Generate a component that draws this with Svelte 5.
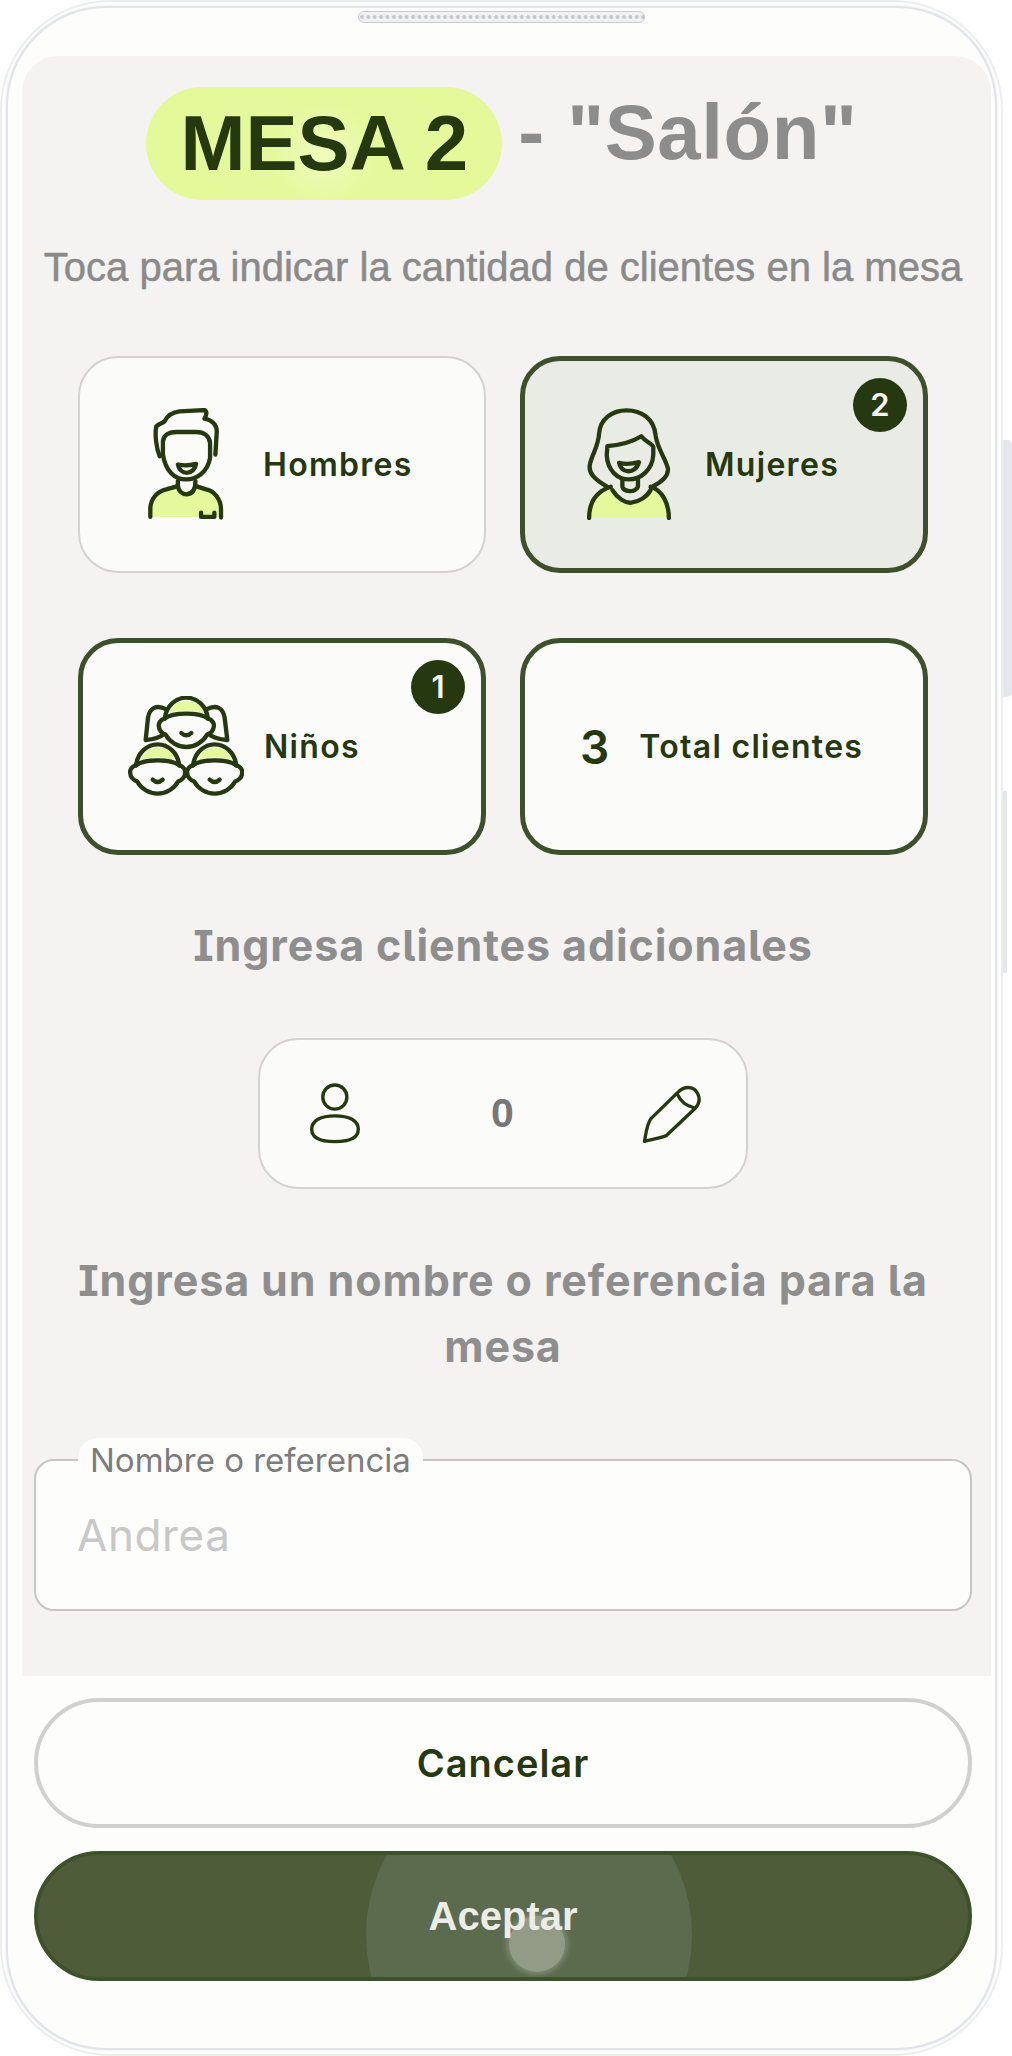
<script>
  const heads = [
    { x: 380, y: 283 },
    { x: 294, y: 423 },
    { x: 465, y: 423 }
  ];
</script>

<div class="device">
  <div class="side-key long"></div>
  <div class="side-key short"></div>
  <div class="bezel">
    <div class="speaker"></div>
    <main class="content">
      <div class="title">
        <span class="pill">MESA 2</span>
        <span class="place">- "Salón"</span>
      </div>
      <p class="hint">Toca para indicar la cantidad de clientes en la mesa</p>

      <div class="cards">
        <div class="card">
          <svg class="ico hombre" viewBox="262 200 232 340">
            <path class="lime" d="M272 528V500C275 470 295 450 320 445L352 436C360 455 400 455 412 436L440 445C465 450 485 475 485 505V528Z"/>
            <path d="M300 345C290 320 285 280 290 255C300 245 310 245 315 240C325 220 340 212 360 210L435 206C445 210 440 225 435 232C455 235 475 250 472 275L468 340"/>
            <path d="M310 340V300C312 280 330 272 350 272H410C435 272 450 285 452 305V350C445 390 415 415 380 415C345 415 318 390 310 340Z"/>
            <path d="M355 370Q380 376 410 368C408 385 395 395 382 395C368 395 358 385 355 370Z"/>
            <path d="M355 420V432C355 450 370 460 380 460C395 460 408 450 408 420"/>
            <path d="M272 528V500C275 470 295 450 320 445L352 436M412 436L440 445C465 450 485 475 485 505V530"/>
            <path d="M425 515V528H465V515"/>
          </svg>
          <span class="label">Hombres</span>
        </div>

        <div class="card on tint">
          <svg class="ico mujer" viewBox="226 200 258 340">
            <path class="lime" d="M235 532C235 490 255 455 300 440C315 470 350 490 365 485C385 480 410 470 420 440C455 450 475 490 475 532Z"/>
            <path d="M290 440C255 420 230 400 238 370C245 340 262 320 265 280C268 235 305 210 348 210C392 210 430 235 435 285C440 325 465 355 472 385C475 410 445 430 425 440"/>
            <path d="M290 318C320 315 365 305 392 288C405 305 425 310 428 320V345C425 390 390 418 355 418C320 418 290 390 288 345Z"/>
            <path d="M325 368Q350 375 385 366C380 385 365 395 350 393C338 392 328 382 325 368Z"/>
            <path d="M335 418V440C340 455 370 460 382 440V418"/>
            <path d="M235 534C235 490 255 455 300 440M420 440C455 450 475 490 475 534"/>
            <path d="M305 450C320 475 345 490 362 488C385 485 410 470 420 450"/>
          </svg>
          <span class="label">Mujeres</span>
          <span class="badge">2</span>
        </div>

        <div class="card on kids">
          <svg class="ico ninos" viewBox="205 200 348 300">
            <path class="paper" d="M320 240C290 225 270 235 265 265L258 332C280 330 300 325 312 315"/>
            <path class="paper" d="M440 240C470 225 490 235 495 265L503 332C480 330 460 325 448 315"/>
            {#each heads as h}
              <g transform="translate({h.x} {h.y})">
                <path class="paper" d="M-65-15C-60-55-30-78 0-78C30-78 60-55 65-15C78-12 85 0 82 10C82 20 72 30 62 33C50 55 25 70 0 70C-25 70-50 55-62 33C-72 30-82 20-82 10C-85 0-78-12-65-15Z"/>
                <path class="lime" d="M-50-32C-40-60-20-68 0-68C22-68 42-60 50-32C25-42-25-42-50-32Z"/>
                <path d="M-65-15C-40-35 40-35 65-15"/>
                <path d="M-15 28Q0 42 15 28"/>
              </g>
            {/each}
          </svg>
          <span class="label">Niños</span>
          <span class="badge">1</span>
        </div>

        <div class="card on total">
          <span class="sum">3</span>
          <span class="label">Total clientes</span>
        </div>
      </div>

      <h2 class="heading one">Ingresa clientes adicionales</h2>

      <div class="extra">
        <svg class="thin person" viewBox="175 160 155 185">
          <circle cx="252" cy="202" r="36"/>
          <path d="M252 258C295 258 322 272 322 298C322 325 295 335 252 335C210 335 183 325 183 298C183 272 210 258 252 258Z"/>
        </svg>
        <span class="zero">0</span>
        <svg class="thin pencil" viewBox="1175 160 185 180">
          <path d="M1185 332C1190 305 1192 280 1205 263L1285 185C1305 165 1335 165 1345 190C1355 210 1345 225 1335 235L1250 315C1232 322 1210 326 1185 332Z"/>
          <path d="M1283 190C1295 215 1310 225 1335 232"/>
        </svg>
      </div>

      <h2 class="heading two">Ingresa un nombre o referencia para la mesa</h2>

      <div class="field">
        <span class="legend">Nombre o referencia</span>
        <span class="placeholder">Andrea</span>
      </div>
    </main>

    <footer class="actions">
      <button class="btn cancel">Cancelar</button>
      <button class="btn accept">
        <span class="ripple"></span>
        <span class="touch"></span>
        <span class="accept-text">Aceptar</span>
      </button>
    </footer>
  </div>
</div>

<style>
  :global(body) {
    margin: 0;
    background: #fff;
    font-family: "Liberation Sans", Arial, sans-serif;
  }

  .device {
    position: relative;
    box-sizing: border-box;
    width: 1003px;
    height: 2056px;
    padding: 4px;
    border: 2px solid #eceded;
    border-radius: 110px;
    background: #fff;
  }

  .side-key {
    position: absolute;
    background: #e6e7ec;
  }
  .side-key.long {
    left: 1001px;
    top: 438px;
    width: 9px;
    height: 257px;
    border-radius: 0 5px 5px 0;
  }
  .side-key.short {
    left: 1001px;
    top: 789px;
    width: 4px;
    height: 182px;
  }

  .bezel {
    position: relative;
    box-sizing: border-box;
    height: 100%;
    padding: 48px 4px 0 14px;
    border: 2px solid #e2e3e8;
    border-radius: 100px;
    background: #fdfdfc;
    box-shadow: 0 0 3px #e4e5ea;
  }

  .speaker {
    position: absolute;
    left: 350px;
    top: 3px;
    box-sizing: border-box;
    width: 287px;
    height: 12px;
    border: 1px solid #c9cad0;
    border-radius: 6px;
    background: radial-gradient(circle at 3px 5px, #c6c7cc 1.6px, #f1f1f4 2.2px) 0 0 / 6.4px 10px;
  }

  .content {
    box-sizing: border-box;
    height: 1620px;
    padding: 31px 19px 0 12px;
    border-radius: 36px 36px 0 0;
    background: #f4f3f1;
  }

  .title {
    display: flex;
    align-items: flex-start;
    justify-content: center;
    gap: 16px;
    height: 113px;
    padding-right: 2px;
    font-size: 78px;
    font-weight: 700;
  }
  .pill {
    width: 356px;
    height: 113px;
    border-radius: 57px;
    background: radial-gradient(circle at 50% 60%, #eefbbd 0, #e4f99c 28%, #e3f999 100%);
    color: #26380f;
    line-height: 113px;
    text-align: center;
  }
  .place {
    margin-top: 1px;
    color: #8c8c8c;
    line-height: 88px;
    letter-spacing: 0.6px;
  }

  .hint {
    margin: 44px 0 0;
    color: #8a8a8a;
    font-size: 40px;
    line-height: 46px;
    text-align: center;
    white-space: nowrap;
    -webkit-text-stroke: 0.5px #8a8a8a;
  }

  .cards {
    display: grid;
    grid-template-columns: 408px 408px;
    grid-auto-rows: 217px;
    gap: 65px 34px;
    justify-content: center;
    margin-top: 66px;
  }
  .card {
    position: relative;
    box-sizing: border-box;
    display: flex;
    align-items: center;
    padding-left: 67px;
    border: 2px solid #d2d2d0;
    border-radius: 40px;
    background: #fbfbfa;
  }
  .card.on {
    padding-left: 61px;
    border: 5px solid #3e4f2b;
  }
  .card.tint {
    background: #e9ece5;
  }
  .card.kids {
    padding-left: 45px;
  }
  .card.total {
    padding-left: 55px;
  }

  .label {
    color: #26380f;
    font-family: Inter, sans-serif;
    font-size: 32px;
    font-weight: 600;
    letter-spacing: 1.3px;
  }

  .ico {
    flex: none;
    fill: none;
    stroke: #26380f;
    stroke-width: 13;
    stroke-linecap: round;
    stroke-linejoin: round;
  }
  .ico .lime {
    fill: #e4f99c;
    stroke: none;
  }
  .ico .paper {
    fill: #fbfbfa;
  }
  .ico.hombre {
    width: 77px;
    height: 113px;
    margin-right: 39px;
  }
  .ico.mujer {
    width: 86px;
    height: 113px;
    margin-top: -2px;
    margin-right: 33px;
  }
  .ico.ninos {
    width: 116px;
    height: 100px;
    margin-top: -1px;
    margin-right: 20px;
  }

  .badge {
    position: absolute;
    top: 17px;
    right: 16px;
    width: 54px;
    height: 54px;
    border-radius: 50%;
    background: #26380f;
    color: #f6f6f2;
    font-family: Inter, sans-serif;
    font-size: 31px;
    font-weight: 600;
    line-height: 54px;
    text-align: center;
  }

  .sum {
    margin-right: 30px;
    color: #26380f;
    font-family: Inter, sans-serif;
    font-size: 46px;
    font-weight: 600;
  }

  .heading {
    margin: 0;
    color: #8e8e8e;
    font-family: Inter, sans-serif;
    font-size: 43px;
    font-weight: 700;
    font-feature-settings: "cv08" 1, "cv05" 1;
    letter-spacing: 0.9px;
    line-height: 66px;
    text-align: center;
  }
  .heading.one {
    margin-top: 57px;
  }
  .heading.two {
    margin-top: 58px;
  }

  .extra {
    box-sizing: border-box;
    display: flex;
    align-items: center;
    justify-content: space-between;
    width: 490px;
    height: 151px;
    margin: 60px auto 0;
    padding: 0 43px 0 49px;
    border: 2px solid #d2d2d0;
    border-radius: 40px;
    background: #fbfbfa;
  }
  .thin {
    flex: none;
    fill: none;
    stroke: #26380f;
    stroke-width: 10;
    stroke-linecap: round;
    stroke-linejoin: round;
  }
  .person {
    width: 52px;
    height: 62px;
  }
  .pencil {
    width: 62px;
    height: 60px;
  }
  .zero {
    margin-left: 3px;
    color: #777;
    font-size: 41px;
    font-weight: 700;
  }

  .field {
    position: relative;
    box-sizing: border-box;
    display: flex;
    align-items: center;
    height: 152px;
    margin-top: 80px;
    padding-left: 41px;
    border: 2px solid #c6c6c4;
    border-radius: 20px;
    background: #fdfdfc;
  }
  .legend {
    position: absolute;
    left: 42px;
    top: -23px;
    padding: 0 12px;
    border-radius: 20px 20px 0 0;
    background: #fdfdfc;
    color: #7c7c7c;
    font-family: Inter, sans-serif;
    font-size: 33px;
    line-height: 44px;
  }
  .placeholder {
    color: #c8c8c8;
    font-family: Inter, sans-serif;
    font-size: 44px;
    letter-spacing: 0.6px;
  }

  .actions {
    display: flex;
    flex-direction: column;
    gap: 23px;
    padding: 22px 19px 0 12px;
  }
  .btn {
    display: block;
    box-sizing: border-box;
    width: 100%;
    height: 130px;
    border-radius: 65px;
    font-family: Inter, sans-serif;
    font-size: 38px;
    font-weight: 600;
  }
  .cancel {
    border: 4px solid #d0d0ce;
    background: #fdfdfc;
    color: #26380f;
    letter-spacing: 1px;
  }
  .accept {
    position: relative;
    height: 130px;
    overflow: hidden;
    border: 4px solid #3e5229;
    background: #4e5c3a;
    color: #ecece8;
    font-family: "Liberation Sans", sans-serif;
    font-size: 40px;
    font-weight: 700;
  }
  .accept-text {
    position: relative;
  }
  .ripple {
    position: absolute;
    left: 328px;
    top: -83px;
    width: 326px;
    height: 326px;
    border-radius: 50%;
    background: #5c6b4e;
  }
  .touch {
    position: absolute;
    left: 471px;
    top: 61px;
    width: 56px;
    height: 56px;
    border-radius: 50%;
    background: #929b86;
    box-shadow: 0 0 5px 3px rgba(170, 180, 160, 0.4);
  }
</style>
